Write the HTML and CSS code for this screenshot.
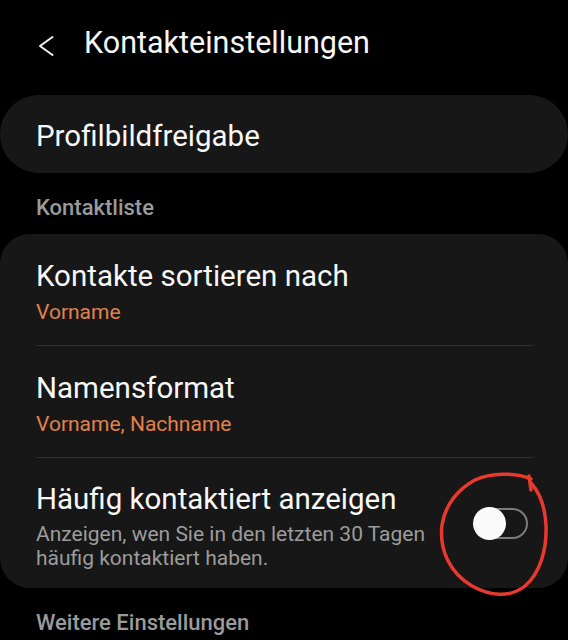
FILE: index.html
```html
<!DOCTYPE html>
<html lang="de">
<head>
<meta charset="utf-8">
<title>Kontakteinstellungen</title>
<link rel="stylesheet" href="styles.css">
</head>
<body>
<div class="screen">
  <header class="appbar">
    <svg class="back" width="16" height="22" viewBox="0 0 16 22" aria-hidden="true">
      <path d="M14.5 2 L2 11 L14.5 20" fill="none" stroke="#f2f2f2" stroke-width="2" stroke-linecap="round" stroke-linejoin="round"/>
    </svg>
    <h1 class="appbar-title">Kontakteinstellungen</h1>
  </header>

  <div class="card card-pill">
    <div class="item item-single">
      <div class="item-title">Profilbildfreigabe</div>
    </div>
  </div>

  <div class="section-label">Kontaktliste</div>

  <div class="card">
    <div class="item">
      <div class="item-title">Kontakte sortieren nach</div>
      <div class="item-value">Vorname</div>
    </div>
    <div class="divider"></div>
    <div class="item">
      <div class="item-title">Namensformat</div>
      <div class="item-value">Vorname, Nachname</div>
    </div>
    <div class="divider"></div>
    <div class="item item-switch">
      <div class="item-text">
        <div class="item-title">Häufig kontaktiert anzeigen</div>
        <div class="item-desc">Anzeigen, wen Sie in den letzten 30 Tagen häufig kontaktiert haben.</div>
      </div>
      <div class="switch">
        <div class="switch-track"></div>
        <div class="switch-thumb"></div>
      </div>
    </div>
  </div>

  <div class="section-label">Weitere Einstellungen</div>

  <svg class="annotation" width="130" height="140" viewBox="0 0 130 140" aria-hidden="true">
    <path d="M101 14 C85 7, 60 8, 45 15 C28 24, 15 40, 12 60 C9 85, 20 108, 42 121 C60 131, 80 133, 95 121 C110 108, 117 85, 116 60 C115 42, 110 28, 101 18"
          fill="none" stroke="#e8392e" stroke-width="3.5" stroke-linecap="round" stroke-linejoin="round"/>
    <path d="M99 11 L101 25" fill="none" stroke="#e8392e" stroke-width="3.5" stroke-linecap="round"/>
  </svg>
</div>
</body>
</html>
```

FILE: styles.css
```css
html, body {
  margin: 0;
  padding: 0;
  background: #000;
}

body {
  font-family: Roboto, "Noto Sans", "Liberation Sans", sans-serif;
  color: #f7f7f7;
  -webkit-font-smoothing: antialiased;
}

.screen {
  position: relative;
  width: 568px;
  height: 640px;
  overflow: hidden;
  background: #000;
}

.appbar {
  display: flex;
  align-items: flex-start;
  gap: 30px;
  padding: 25px 0 34px 38px;
}

.back {
  flex: none;
  margin-top: 10px;
}

.appbar-title {
  margin: 0;
  font-size: 30.5px;
  line-height: 36px;
  font-weight: 400;
  color: #f7f7f7;
}

.card {
  background: #171717;
  border-radius: 30px;
}

.card-pill {
  border-radius: 39px;
}

.item {
  padding: 25px 36px 20px 36px;
}

.item-single {
  padding: 24px 36px 20px 36px;
}

.item-title {
  font-size: 29.5px;
  line-height: 34px;
  color: #f7f7f7;
}

.item-value {
  margin-top: 6px;
  font-size: 21px;
  line-height: 26px;
  color: #e2814c;
}

.divider {
  height: 1px;
  margin: 0 35px 0 36px;
  background: #2f2f2f;
}

.item-switch {
  display: flex;
  align-items: center;
  gap: 30px;
  padding: 24px 40px 18px 36px;
}

.item-text {
  flex: 1;
  min-width: 0;
}

.item-desc {
  margin-top: 6px;
  font-size: 21px;
  line-height: 24px;
  color: #9c9c9c;
}

.switch {
  position: relative;
  flex: none;
  width: 55px;
  height: 33px;
  margin-top: -6px;
}

.switch-track {
  position: absolute;
  left: 2px;
  top: 1px;
  width: 53px;
  height: 31px;
  box-sizing: border-box;
  border: 2px solid #7c7c7c;
  border-radius: 16px;
}

.switch-thumb {
  position: absolute;
  left: 0;
  top: 0;
  width: 33px;
  height: 33px;
  border-radius: 50%;
  background: #fafafa;
}

.section-label {
  padding: 22px 36px 13px 36px;
  font-size: 22px;
  line-height: 26px;
  font-weight: 500;
  color: #9a9a9a;
}

.annotation {
  position: absolute;
  left: 430px;
  top: 465px;
}
```
